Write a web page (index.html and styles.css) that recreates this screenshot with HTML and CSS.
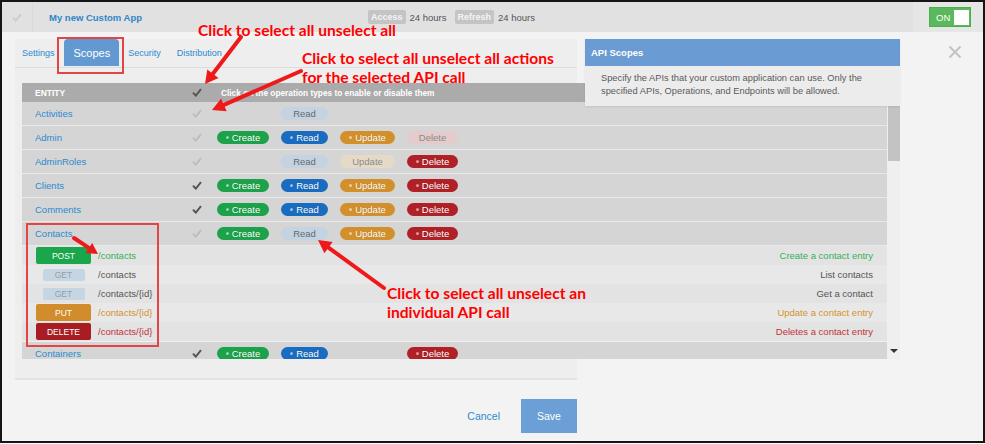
FILE: index.html
```html
<!DOCTYPE html>
<html>
<head>
<meta charset="utf-8">
<title>My new Custom App - Scopes</title>
<link rel="stylesheet" href="styles.css">
</head>
<body>
<div class="frame">
  <header class="topbar">
    <div class="tb-check"><svg class="ck ck-top" width="10" height="9" viewBox="0 0 10 9"><path d="M1 4.6 L3.8 7.6 L9 1.2" fill="none" stroke="currentColor" stroke-width="2"/></svg></div>
    <div class="tb-title">My new Custom App</div>
    <div class="tb-tokens">
      <span class="badge">Access</span><span class="tok">24 hours</span>
      <span class="badge">Refresh</span><span class="tok">24 hours</span>
    </div>
    <div class="tb-toggle"><div class="toggle"><span>ON</span><i class="knob"></i></div></div>
  </header>

  <main class="main">
    <section class="panel">
      <nav class="tabs">
        <a class="tab">Settings</a>
        <a class="tab active">Scopes</a>
        <a class="tab">Security</a>
        <a class="tab tab-last">Distribution</a>
      </nav>

      <div class="grid-wrap">
        <div class="grid">
          <div class="row head">
            <div class="name">ENTITY</div>
            <div class="chk"><svg class="ck ck-dark" width="10" height="9" viewBox="0 0 10 9"><path d="M1 4.6 L3.8 7.6 L9 1.2" fill="none" stroke="currentColor" stroke-width="2"/></svg></div>
            <div class="head-hint">Click on the operation types to enable or disable them</div>
          </div>

          <div class="row">
            <div class="name">Activities</div>
            <div class="chk"><svg class="ck ck-light" width="10" height="9" viewBox="0 0 10 9"><path d="M1 4.6 L3.8 7.6 L9 1.2" fill="none" stroke="currentColor" stroke-width="2"/></svg></div>
            <div class="ops">
              <span></span><span class="pill read off">Read</span><span></span><span></span>
            </div>
          </div>

          <div class="row">
            <div class="name">Admin</div>
            <div class="chk"><svg class="ck ck-light" width="10" height="9" viewBox="0 0 10 9"><path d="M1 4.6 L3.8 7.6 L9 1.2" fill="none" stroke="currentColor" stroke-width="2"/></svg></div>
            <div class="ops">
              <span class="pill create">Create</span><span class="pill read">Read</span><span class="pill update">Update</span><span class="pill delete off">Delete</span>
            </div>
          </div>

          <div class="row">
            <div class="name">AdminRoles</div>
            <div class="chk"><svg class="ck ck-light" width="10" height="9" viewBox="0 0 10 9"><path d="M1 4.6 L3.8 7.6 L9 1.2" fill="none" stroke="currentColor" stroke-width="2"/></svg></div>
            <div class="ops">
              <span></span><span class="pill read off">Read</span><span class="pill update off">Update</span><span class="pill delete">Delete</span>
            </div>
          </div>

          <div class="row">
            <div class="name">Clients</div>
            <div class="chk"><svg class="ck ck-dark" width="10" height="9" viewBox="0 0 10 9"><path d="M1 4.6 L3.8 7.6 L9 1.2" fill="none" stroke="currentColor" stroke-width="2"/></svg></div>
            <div class="ops">
              <span class="pill create">Create</span><span class="pill read">Read</span><span class="pill update">Update</span><span class="pill delete">Delete</span>
            </div>
          </div>

          <div class="row">
            <div class="name">Comments</div>
            <div class="chk"><svg class="ck ck-dark" width="10" height="9" viewBox="0 0 10 9"><path d="M1 4.6 L3.8 7.6 L9 1.2" fill="none" stroke="currentColor" stroke-width="2"/></svg></div>
            <div class="ops">
              <span class="pill create">Create</span><span class="pill read">Read</span><span class="pill update">Update</span><span class="pill delete">Delete</span>
            </div>
          </div>

          <div class="row">
            <div class="name">Contacts</div>
            <div class="chk"><svg class="ck ck-light" width="10" height="9" viewBox="0 0 10 9"><path d="M1 4.6 L3.8 7.6 L9 1.2" fill="none" stroke="currentColor" stroke-width="2"/></svg></div>
            <div class="ops">
              <span class="pill create">Create</span><span class="pill read off">Read</span><span class="pill update">Update</span><span class="pill delete">Delete</span>
            </div>
          </div>

          <div class="sub">
            <div class="method"><span class="mbtn post">POST</span></div>
            <div class="path c-green">/contacts</div>
            <div class="desc c-green">Create a contact entry</div>
          </div>
          <div class="sub alt">
            <div class="method"><span class="mbtn get">GET</span></div>
            <div class="path c-gray">/contacts</div>
            <div class="desc c-gray">List contacts</div>
          </div>
          <div class="sub">
            <div class="method"><span class="mbtn get">GET</span></div>
            <div class="path c-gray">/contacts/{id}</div>
            <div class="desc c-gray">Get a contact</div>
          </div>
          <div class="sub alt">
            <div class="method"><span class="mbtn put">PUT</span></div>
            <div class="path c-orange">/contacts/{id}</div>
            <div class="desc c-orange">Update a contact entry</div>
          </div>
          <div class="sub">
            <div class="method"><span class="mbtn del">DELETE</span></div>
            <div class="path c-red">/contacts/{id}</div>
            <div class="desc c-red">Deletes a contact entry</div>
          </div>

          <div class="row after-sub">
            <div class="name">Containers</div>
            <div class="chk"><svg class="ck ck-dark" width="10" height="9" viewBox="0 0 10 9"><path d="M1 4.6 L3.8 7.6 L9 1.2" fill="none" stroke="currentColor" stroke-width="2"/></svg></div>
            <div class="ops">
              <span class="pill create">Create</span><span class="pill read">Read</span><span></span><span class="pill delete">Delete</span>
            </div>
          </div>
        </div>
        <div class="scrollbar"><div class="thumb"></div><div class="sb-arrow"></div></div>
      </div>
    </section>

    <div class="actions">
      <a class="cancel">Cancel</a>
      <button class="save">Save</button>
    </div>

    <aside class="popover">
      <div class="pop-head">API Scopes</div>
      <div class="pop-body">Specify the APIs that your custom application can use. Only the<br>specified APIs, Operations, and Endpoints will be allowed.</div>
    </aside>

    <svg class="close" width="14" height="14" viewBox="0 0 14 14"><path d="M1.5 1.5 L12.5 12.5 M12.5 1.5 L1.5 12.5" stroke="#c2c2c2" stroke-width="2"/></svg>
  </main>

  <div class="annot">
    <div class="redbox box-tab"></div>
    <div class="redbox box-contacts"></div>
    <div class="note note1">Click to select all unselect all</div>
    <div class="note note2">Click to select all unselect all actions<br>for the selected API call</div>
    <div class="note note3">Click to select all unselect an<br>individual API call</div>
    <svg class="arrows" width="985" height="444" viewBox="0 0 985 444">
      <g stroke="#ee1a1a" stroke-width="4" stroke-linecap="round" fill="#ee1a1a">
        <line x1="241" y1="37" x2="212.9" y2="73.7"/>
        <polygon stroke="none" points="205,84 218.5,78 207.3,69.4"/>
        <line x1="301" y1="71" x2="223.9" y2="104.8"/>
        <polygon stroke="none" points="212,110 226.7,111.2 221.1,98.4"/>
        <line x1="74" y1="238" x2="88.9" y2="247.9"/>
        <polygon stroke="none" points="98,254 85.5,252.9 92.2,242.9"/>
        <line x1="384" y1="288" x2="328.5" y2="247.6"/>
        <polygon stroke="none" points="318,240 332.6,241.9 324.4,253.3"/>
      </g>
    </svg>
  </div>
</div>
</body>
</html>
```

FILE: styles.css
```css
* { box-sizing: border-box; }
html, body { margin: 0; padding: 0; background: #ffffff; }
body {
  width: 985px;
  height: 444px;
  overflow: hidden;
  font-family: "Liberation Sans", Arial, sans-serif;
}

.frame {
  position: relative;
  width: 985px;
  height: 443px;
  border: 2px solid #151515;
  background: #f3f3f3;
  overflow: hidden;
}

/* ---------- top bar ---------- */
.topbar {
  display: flex;
  align-items: center;
  height: 30px;
  background: #e1e1e1;
}
.tb-check {
  width: 31px;
  height: 100%;
  flex: none;
  display: flex;
  align-items: center;
  justify-content: center;
  border-right: 1px solid #dadada;
}
.ck { display: block; }
.ck-top { color: #cdcdcd; }
.ck-dark { color: #555555; }
.ck-light { color: #bdbdbd; }
.tb-title {
  width: 335px;
  flex: none;
  padding-left: 16px;
  font-size: 9.5px;
  font-weight: bold;
  color: #2f86c9;
}
.tb-tokens {
  display: flex;
  align-items: center;
  font-size: 9.5px;
  color: #555555;
}
.badge {
  background: #c4c4c4;
  color: #f4f4f4;
  font-weight: bold;
  font-size: 9px;
  line-height: 10px;
  padding: 2px 3px;
  border-radius: 2px;
}
.tok { margin: 0 8px 0 4px; }
.tb-toggle {
  margin-left: auto;
  width: 70px;
  height: 100%;
  flex: none;
  background: #e6e6e6;
  display: flex;
  align-items: center;
  padding-left: 16px;
}
.toggle {
  width: 42px;
  height: 20px;
  background: #5cb85c;
  border: 1px solid #4cae4c;
  display: flex;
  align-items: center;
  justify-content: space-between;
  padding: 0 1px 0 6px;
  color: #ffffff;
  font-size: 9.5px;
}
.knob { display: block; width: 15px; height: 15px; background: #ffffff; }

/* ---------- main ---------- */
.main {
  position: relative;
  height: 409px;
  padding: 7px 0 0 13px;
}
.panel {
  width: 562px;
  height: 341px;
  background: #eeeeee;
  border-bottom: 2px solid #e2e2e2;
}
.tabs {
  display: flex;
  align-items: stretch;
  height: 29px;
  padding-left: 7px;
  border-bottom: 1px solid #dcdcdc;
}
.tab {
  display: flex;
  align-items: center;
  font-size: 9px;
  color: #2b8ad0;
  margin-right: 9px;
}
.tab.active {
  background: #6399d1;
  color: #ffffff;
  font-size: 11px;
  padding: 0 9px 0 10px;
  border-radius: 4px 4px 0 0;
  margin-bottom: 1px;
}
.tab-last { margin-right: 0; }
.tabs .tab:nth-child(3) { margin-right: 16px; }

.grid-wrap {
  display: flex;
  width: 878px;
  height: 276px;
  margin: 15px 0 0 7px;
  overflow: hidden;
}
.grid { width: 865px; flex: none; }
.scrollbar {
  position: relative;
  width: 13px;
  flex: none;
  background: #efefef;
}
.thumb {
  position: absolute;
  left: 1px;
  right: 0;
  top: 14px;
  height: 64px;
  background: #c3c3c3;
}
.sb-arrow {
  position: absolute;
  left: 3px;
  bottom: 6px;
  width: 0;
  height: 0;
  border-left: 4px solid transparent;
  border-right: 4px solid transparent;
  border-top: 4px solid #333333;
}

.row {
  display: flex;
  align-items: center;
  height: 24px;
  background: #d5d5d5;
  border-bottom: 1px solid #e9e9e9;
}
.row.head {
  height: 19px;
  background: #ababab;
  border-bottom: 0;
  color: #ffffff;
  font-weight: bold;
  font-size: 8.5px;
}
.row.head .name { color: #ffffff; font-size: 8.5px; }
.row.after-sub { border-top: 1px solid #f0f0f0; height: 25px; }
.name {
  width: 165px;
  flex: none;
  padding-left: 13px;
  font-size: 9.5px;
  color: #2b8ad0;
}
.chk {
  width: 20px;
  flex: none;
  display: flex;
  justify-content: center;
}
.head-hint { margin-left: 14px; font-size: 8.3px; white-space: nowrap; }
.ops {
  margin-left: 10px;
  display: grid;
  grid-template-columns: 52px 47px 55px 51px;
  column-gap: 12px;
}
.pill {
  height: 13px;
  border-radius: 7px;
  display: flex;
  align-items: center;
  justify-content: center;
  gap: 3px;
  font-size: 9.5px;
  color: #ffffff;
  text-shadow: 0 0 1px rgba(0,0,0,0.25);
}
.pill::before {
  content: "";
  width: 3px;
  height: 3px;
  border-radius: 50%;
  background: rgba(255,255,255,0.55);
}
.pill.off { text-shadow: none; }
.pill.off::before { display: none; }
.pill.create { background: #1ca24a; }
.pill.read { background: #1a6cc0; }
.pill.update { background: #d2902c; }
.pill.delete { background: #b02027; }
.pill.read.off { background: #c3d3e2; color: #6a6a6a; }
.pill.update.off { background: #e6dac7; color: #8a8a8a; }
.pill.delete.off { background: #e4cccc; color: #8a8a8a; }

.sub {
  display: flex;
  align-items: center;
  height: 19px;
  background: #e3e3e3;
  font-size: 9.5px;
}
.sub.alt { background: #e8e8e8; }
.method {
  width: 55px;
  flex: none;
  margin-left: 14px;
  display: flex;
  justify-content: center;
}
.mbtn {
  width: 55px;
  height: 17px;
  border-radius: 2px;
  display: flex;
  align-items: center;
  justify-content: center;
  color: #ffffff;
  font-size: 8.5px;
}
.mbtn.post { background: #1aa64b; }
.mbtn.put { background: #d18c2b; }
.mbtn.del { background: #a71d23; }
.mbtn.get { width: 42px; height: 12px; background: #c4d5e4; color: #9a9ea3; }
.path { margin-left: 7px; }
.desc { margin-left: auto; padding-right: 14px; }
.c-green { color: #36b158; }
.c-gray { color: #555555; }
.c-orange { color: #d4922e; }
.c-red { color: #c0323b; }

.actions {
  width: 562px;
  margin-top: 19px;
  display: flex;
  align-items: center;
  justify-content: flex-end;
  gap: 21px;
}
.cancel { font-size: 10.5px; color: #2b8ad0; }
.save {
  width: 56px;
  height: 34px;
  border: 0;
  background: #6b9fd6;
  color: #ffffff;
  font-family: inherit;
  font-size: 10.5px;
  padding: 0;
}

.popover {
  position: absolute;
  left: 583px;
  top: 7px;
  width: 315px;
  box-shadow: 0 1px 2px rgba(0,0,0,0.08);
}
.pop-head {
  height: 27px;
  display: flex;
  align-items: center;
  padding-left: 6px;
  background: #6a9bd3;
  color: #ffffff;
  font-weight: bold;
  font-size: 9.5px;
}
.pop-body {
  height: 40px;
  padding: 6px 8px 0 16px;
  background: #ececec;
  color: #5a5a5a;
  font-size: 9.3px;
  line-height: 13px;
  white-space: nowrap;
}
.close { position: absolute; left: 946px; top: 13px; }

/* ---------- annotations overlay ---------- */
.annot {
  position: absolute;
  left: -2px;
  top: -2px;
  width: 985px;
  height: 444px;
  pointer-events: none;
}
.arrows { position: absolute; left: 0; top: 0; }
.redbox { position: absolute; border: 2px solid #e24545; }
.box-tab { left: 57px; top: 37px; width: 67px; height: 37px; }
.box-contacts { left: 26px; top: 223px; width: 133px; height: 124px; }
.note {
  position: absolute;
  color: #ff0000;
  font-family: Lato, "Open Sans", sans-serif;
  font-weight: bold;
  font-size: 15.6px;
  line-height: 19px;
  white-space: nowrap;
}
.note1 { left: 198px; top: 21px; }
.note2 { left: 302px; top: 49px; }
.note3 { left: 387px; top: 284px; }
```
